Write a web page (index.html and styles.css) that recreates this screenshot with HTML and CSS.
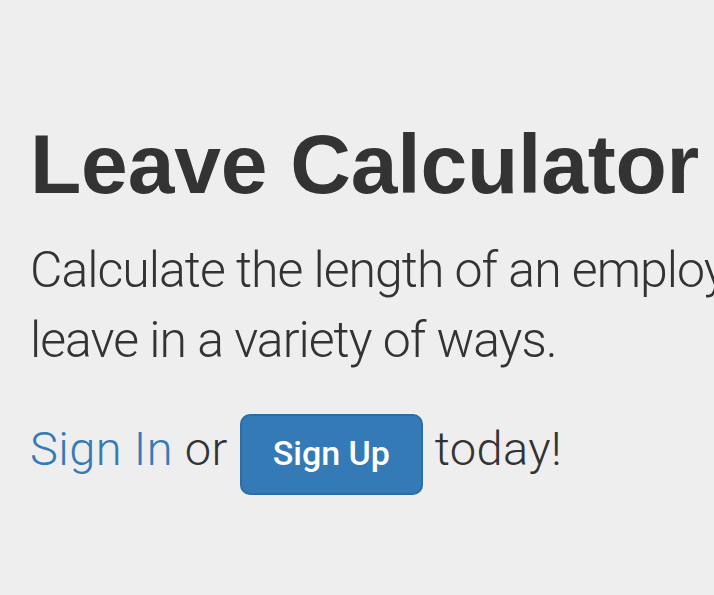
FILE: index.html
```html
<!DOCTYPE html>
<html lang="en">
<head>
<meta charset="utf-8">
<title>Leave Calculator</title>
<link rel="stylesheet" href="styles.css">
</head>
<body>
<div class="jumbotron">
  <div class="container">
    <h1 class="title">Leave Calculator</h1>
    <p class="lead">Calculate the length of an employee's leave in a variety of ways.</p>
    <p class="cta"><a class="link" href="#">Sign In</a> or <a class="btn" href="#">Sign Up</a> today!</p>
  </div>
</div>
</body>
</html>
```

FILE: styles.css
```css
html, body {
  margin: 0;
  padding: 0;
  overflow: hidden;
  background: #eeeeee;
}
body {
  color: #333333;
  font-family: "Liberation Sans", Arial, sans-serif;
}
.jumbotron {
  background: #eeeeee;
  padding-top: 118px;
  min-height: 595px;
  box-sizing: border-box;
}
.container {
  width: 860px;
  padding-left: 30px;
}
.title {
  margin: 0 0 25px;
  font-family: "Liberation Sans", Arial, sans-serif;
  font-weight: 700;
  font-size: 84px;
  line-height: 1.1;
  letter-spacing: -0.2px;
  color: #333333;
}
.lead {
  margin: 0 0 39px;
  font-family: Roboto, "Liberation Sans", sans-serif;
  font-weight: 300;
  font-size: 50px;
  line-height: 70px;
  letter-spacing: -1px;
  color: #333333;
}
.cta {
  margin: 0;
  font-family: Roboto, "Liberation Sans", sans-serif;
  font-weight: 300;
  font-size: 47px;
  line-height: 63px;
  letter-spacing: 0.4px;
  color: #333333;
}
.link {
  color: #337ab7;
  text-decoration: none;
}
.btn {
  display: inline-block;
  font-family: Roboto, "Liberation Sans", sans-serif;
  font-weight: 500;
  font-size: 34px;
  line-height: 48px;
  letter-spacing: 0;
  padding: 13px 31px 16px;
  color: #ffffff;
  background: #337ab7;
  border: 2px solid #2e6da4;
  border-radius: 10px;
  text-decoration: none;
}
```
